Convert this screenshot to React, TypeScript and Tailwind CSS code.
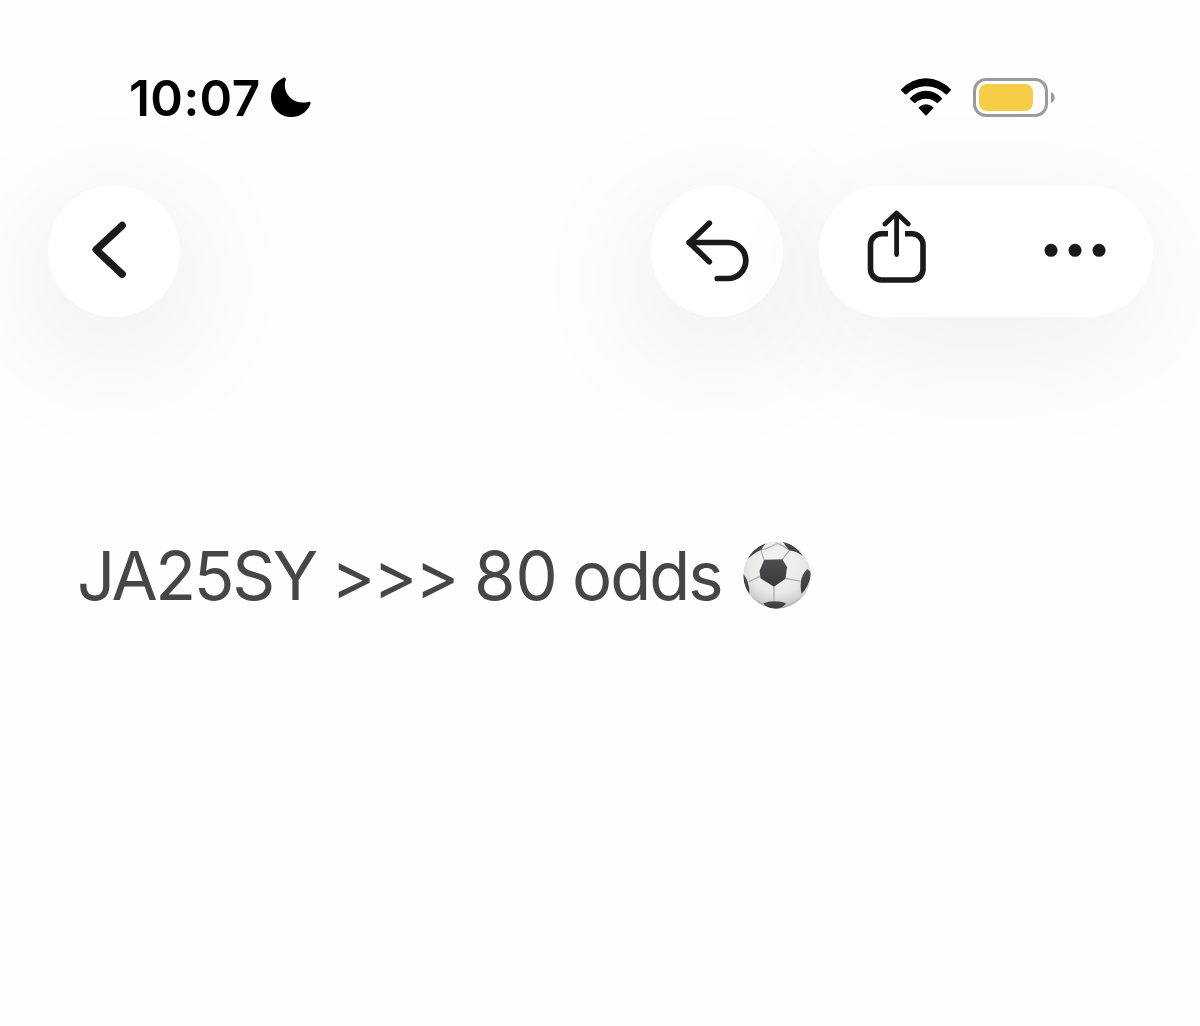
import type { ReactNode } from 'react';

function MoonIcon() {
  return (
    <svg width="40" height="40" viewBox="0 0 120 120" fill="black">
      <path d="M36 3C41 0 46 3 44 9C32 43 62 86 112 75C118 73 121 78 117 84C106 107 86 120 62 120C27 120 0 94 0 59C0 35 14 13 36 3Z" />
    </svg>
  );
}

function WifiIcon() {
  return (
    <svg width="50" height="38" viewBox="0 0 150 114" fill="black">
      <path d="M1 34A99.500 99.500 0 0 1 149 34Q151 35.500 149 37.500L138 48.500Q136 50.500 133.500 48.500A84 84 0 0 0 16.500 48.500Q14 50.500 12 48.500L1 37.500Q-1 35.500 1 34Z" />
      <path d="M27.500 60A63 63 0 0 1 122.500 60Q124.500 61.500 122.500 63.500L111 74.500Q109 76.500 106.500 74.500A46 46 0 0 0 43.500 74.500Q41 76.500 39 74.500L27.500 63.500Q25.500 61.500 27.500 60Z" />
      <path d="M53.500 87.500A31 31 0 0 1 96.500 87.500Q98.500 89 96.500 91L77 111.500Q75 113.500 73 111.500L53.500 91Q51.500 89 53.500 87.500Z" />
    </svg>
  );
}

function Battery() {
  return (
    <div className="flex items-center gap-[3px]">
      <div className="h-[39px] w-[75px] rounded-[13px] border-[3px] border-[#9b9b9b] p-[3px]">
        <div className="h-[27px] w-[54px] rounded-[8px] bg-[#f5cd47]" />
      </div>
      <svg width="4" height="11" fill="#9b9b9b">
        <path d="M0 0C5 2.500 5 8.500 0 11Z" />
      </svg>
    </div>
  );
}

function StatusBar() {
  return (
    <div className="flex h-[40px] items-center pl-[129px] text-black">
      <span className="w-[142px] pt-[2px] whitespace-nowrap text-[49.5px] leading-[40px] font-semibold tracking-[0.4px]">
        10:07
      </span>
      <MoonIcon />
      <div className="ml-[590px] flex items-center gap-[22px]">
        <WifiIcon />
        <Battery />
      </div>
    </div>
  );
}

function GlassButton({ label, children }: { label: string; children: ReactNode }) {
  return (
    <button
      aria-label={label}
      className="h-[132px] w-[132px] rounded-full bg-white shadow-[0_28px_128px_10px_rgba(0,0,0,0.08)]"
    >
      {children}
    </button>
  );
}

function Toolbar() {
  return (
    <div className="mt-[68px] flex h-[132px] pl-[48px] text-[#1a1a1a]">
      <GlassButton label="Back">
        <svg width="132" height="132" fill="none" stroke="currentColor" strokeLinecap="round" strokeLinejoin="round">
          <path d="M74.200 40.500L48.200 64.800L74.200 89.300" strokeWidth="7.400" />
        </svg>
      </GlassButton>

      <div className="ml-[471px] flex gap-9">
        <GlassButton label="Undo">
          <svg width="132" height="132" fill="none" stroke="currentColor" strokeLinecap="round" strokeLinejoin="round" strokeWidth="5.700">
            <path d="M58.300 38.300L38.300 57.500L58.300 76.800" />
            <path d="M38.300 57.500H77A17.800 18 0 0 1 77 93.500H66.300" />
          </svg>
        </GlassButton>

        <div className="flex h-[132px] w-[334px] rounded-full bg-white shadow-[0_28px_128px_rgba(0,0,0,0.065)]">
          <button aria-label="Share">
            <svg width="167" height="132" fill="none" stroke="currentColor">
              <path d="M69 48.800H62.500A11 11 0 0 0 51.500 59.800V84A11 11 0 0 0 62.500 95H93A11 11 0 0 0 104 84V59.800A11 11 0 0 0 93 48.800H86" strokeWidth="5.600" />
              <path d="M77.600 69.500V28.200M66 39L77.600 28L89.200 39" strokeWidth="4.800" strokeLinecap="round" strokeLinejoin="round" />
            </svg>
          </button>
          <button aria-label="More">
            <svg width="167" height="132" fill="currentColor">
              <circle cx="65" cy="65.300" r="6.500" />
              <circle cx="89" cy="65.300" r="6.500" />
              <circle cx="113" cy="65.300" r="6.500" />
            </svg>
          </button>
        </div>
      </div>
    </div>
  );
}

function SoccerBall() {
  return (
    <svg width="68" height="68" viewBox="26 27 202 202">
      <defs>
        <radialGradient id="ball" cx="0.5" cy="0.35" r="0.65">
          <stop offset="0" stopColor="#f7f7f7" />
          <stop offset="0.65" stopColor="#e8e8e8" />
          <stop offset="0.9" stopColor="#cfcfcf" />
          <stop offset="1" stopColor="#a5a5a5" />
        </radialGradient>
        <linearGradient id="patch" x1="0" y1="0" x2="0" y2="1">
          <stop offset="0" stopColor="#4e4e50" />
          <stop offset="1" stopColor="#39393b" />
        </linearGradient>
        <clipPath id="ballClip">
          <circle cx="127" cy="128" r="100" />
        </clipPath>
      </defs>
      <circle cx="127" cy="128" r="100" fill="url(#ball)" />
      <g clipPath="url(#ballClip)">
        <path
          d="M89 84L79 54M142 82L164 55M152 138L196 146M118 162L118 207M76 132L43 148M79 54Q110 46 128 34M164 55Q150 42 128 34"
          fill="none"
          stroke="#a9a9a9"
          strokeWidth="3.500"
        />
        <path d="M89 83L143 81L157 105L152 139L118 163L78 138L75 116Z" fill="url(#patch)" />
        <path d="M96 30Q74 38 60 51Q46 62 40 80Q60 61 80 53Q89 40 96 30Z" fill="url(#patch)" />
        <path d="M143 28Q154 45 164 55Q187 57 204 72Q184 40 143 28Z" fill="url(#patch)" />
        <path d="M217 110Q201 126 198 147Q196 170 200 184Q224 160 229 120Z" fill="url(#patch)" />
        <path d="M25 125Q37 134 42 158Q46 170 45 184Q25 160 25 125Z" fill="url(#patch)" />
        <path d="M86 213Q103 205 120 206Q142 206 154 213Q142 229 120 229Q101 229 86 213Z" fill="url(#patch)" />
      </g>
    </svg>
  );
}

export default function App() {
  return (
    <main className="h-[1026px] w-[1200px] overflow-hidden bg-[#fefefe] pt-[77px] font-['Inter',sans-serif]">
      <StatusBar />
      <Toolbar />
      <div className="mt-[224px] flex h-[68px] items-center pl-[77px] text-[67px] leading-[68px] whitespace-nowrap text-[#464646]">
        <span className="w-[254px] pt-px tracking-[-2.4px]">JA25SY</span>
        <span className="w-[143px] pt-px tracking-[-2.3px]">&gt;&gt;&gt;</span>
        <span className="w-[98px] pt-px">80</span>
        <span className="w-[171px] pt-px tracking-[-2px]">odds</span>
        <SoccerBall />
      </div>
    </main>
  );
}
